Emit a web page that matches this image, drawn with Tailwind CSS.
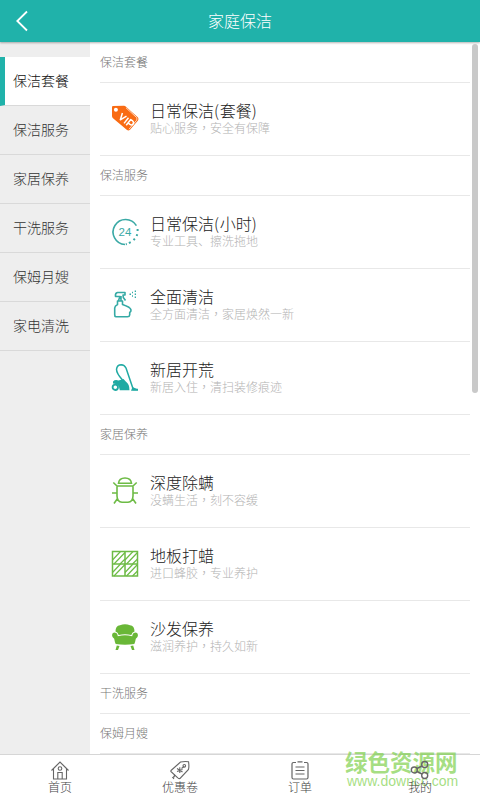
<!DOCTYPE html>
<html lang="zh-CN">
<head>
<meta charset="utf-8">
<title>家庭保洁</title>
<script src="https://cdn.jsdelivr.net/npm/@tailwindcss/browser@4"></script>
</head>
<body class="w-[480px] h-[800px] overflow-hidden bg-white font-['Noto_Sans_CJK_SC',sans-serif] font-light text-[#222]">
<div class="flex flex-col h-[800px] relative">
  <header class="relative z-10 h-[42px] shrink-0 bg-[#20b2aa] shadow-[0_1px_2px_rgba(0,0,0,0.3)] grid grid-cols-[48px_1fr_48px] items-center text-white">
    <svg class="ml-4 w-3 h-[22px]" viewBox="0 0 12 22" fill="none" stroke="currentColor" stroke-width="1.8"><path d="M11 1.5 1.3 11 11 20.5"/></svg>
    <h1 class="text-base leading-[40px] h-[42px] text-center font-light">家庭保洁</h1>
  </header>

  <main class="flex flex-1 min-h-0">
    <nav class="w-[90px] shrink-0 bg-[#eee] pt-[15px] text-sm text-[#333]">
      <a class="block h-[49px] leading-[46px] border-b border-[#d9d9d9] border-l-[5px] border-l-[#20b2aa] pl-2 bg-white text-[#111]">保洁套餐</a>
      <a class="block h-[49px] leading-[46px] border-b border-[#d9d9d9] pl-[13px]">保洁服务</a>
      <a class="block h-[49px] leading-[46px] border-b border-[#d9d9d9] pl-[13px]">家居保养</a>
      <a class="block h-[49px] leading-[46px] border-b border-[#d9d9d9] pl-[13px]">干洗服务</a>
      <a class="block h-[49px] leading-[46px] border-b border-[#d9d9d9] pl-[13px]">保姆月嫂</a>
      <a class="block h-[49px] leading-[46px] border-b border-[#d9d9d9] pl-[13px]">家电清洗</a>
    </nav>

    <section class="flex-1 min-w-0 pl-[10px] pr-[10px] pt-px overflow-hidden">
      <h2 class="h-10 leading-[38px] text-xs text-[#777] border-b border-[#e8e8e8]">保洁套餐</h2>
      <article class="h-[73px] border-b border-[#e8e8e8] flex pl-[10px] pt-5">
        <svg class="w-[30px] h-[30px] mr-[10px] shrink-0" viewBox="0 0 30 30">
          <path d="M3 3 14 2.800Q15 2.800 16 3.800L28 14.500Q29 16 28 17.500L20 26.800Q18.500 28 17 27L3 15.200Q2 14.500 2 13V4.200Q2 3 3 3Z" fill="#f96b13"/>
          <path d="M16 4.800 26.600 14.500Q27.500 16 26.500 17.400L19 26.200" fill="none" stroke="#fff" stroke-width=".7"/>
          <circle cx="5.900" cy="6.800" r="2" fill="#fff"/>
          <g transform="translate(7.200 15) rotate(38)" fill="none" stroke="#fff" stroke-width="1.500" stroke-linejoin="round"><path d="M1-7.200 3.600-.500 6.200-7.200M8.700-7.200V0M11.600.200V-7.200H14Q16.200-7 16.200-5T14-2.800H11.600"/></g>
        </svg>
        <div class="-mt-px"><h3 class="text-base leading-[17px] font-light">日常保洁<span class="tracking-[0.6px]">(</span>套餐<span class="tracking-[0.6px]">)</span></h3><p class="text-xs leading-[18px] text-[#b3b3b3]">贴心服务<span class="font-['Noto_Sans_CJK_TC']" lang="zh-TW">，</span>安全有保障</p></div>
      </article>

      <h2 class="h-10 leading-[38px] text-xs text-[#777] border-b border-[#e8e8e8]">保洁服务</h2>
      <article class="h-[73px] border-b border-[#e8e8e8] flex pl-[10px] pt-5">
        <svg class="w-[30px] h-[30px] mr-[10px] shrink-0" viewBox="0 0 30 30" fill="none" stroke="#3aa9a5" stroke-width="1.6">
          <path d="M26.400 9.700A12.500 12.500 0 1 0 15 28.500"/>
          <path d="M27.600 13v2M27.200 18.300l-.500 1.800M24.800 22.700l-1.200 1.500M20.700 26.200l-1.800.900M16.800 28.100l-1 .200" stroke-width="2"/>
          <text x="15" y="20" text-anchor="middle" font-family="Liberation Sans" font-size="11.5" fill="#3aa9a5" stroke="none">24</text>
        </svg>
        <div class="-mt-px"><h3 class="text-base leading-[17px] font-light">日常保洁<span class="tracking-[0.6px]">(</span>小时<span class="tracking-[0.6px]">)</span></h3><p class="text-xs leading-[18px] text-[#b3b3b3]">专业工具、擦洗拖地</p></div>
      </article>
      <article class="h-[73px] border-b border-[#e8e8e8] flex pl-[10px] pt-5">
        <svg class="w-[30px] h-[30px] mr-[10px] shrink-0" viewBox="0 0 30 30" fill="none" stroke="#35aaa5" stroke-width="1.6" stroke-linejoin="round">
          <path d="M8.500 11.500 10 7.500H5.500Q5 4 7.500 3.500H15V6H13L13.300 8.500 15.500 11.500M11 7v4.500M7.500 12H12.500V15.500Q20.500 18 21 21 21.200 22.500 19.700 23.500V26Q19.500 27.800 17.500 27.800H6Q4.500 27.500 4.700 25.500V19Q4.800 17 7.500 15.500Z"/>
          <path d="M19.500 5.200h1.500M22 3.500h1M22 7h1M24.700 2.300h1.300M24.700 5.200h1.300M24.700 8.200h1.300"/>
        </svg>
        <div class="-mt-px"><h3 class="text-base leading-[17px] font-light">全面清洁</h3><p class="text-xs leading-[18px] text-[#b3b3b3]">全方面清洁<span class="font-['Noto_Sans_CJK_TC']" lang="zh-TW">，</span>家居焕然一新</p></div>
      </article>
      <article class="h-[73px] border-b border-[#e8e8e8] flex pl-[10px] pt-5">
        <svg class="w-[30px] h-[30px] mr-[10px] shrink-0" viewBox="0 0 30 30" fill="none" stroke="#20aaa3">
          <path d="M12.500 18Q6.500 11.500 6.500 7.300 7 2.700 11.300 2.700 14.500 2.800 16 6L23.300 27.500H28" stroke-width="1.500"/>
          <path d="M22.500 25 28 27.600V28.700H21Z" fill="#20aaa3" stroke="none"/>
          <path d="M3 19.500Q5 17.200 8.500 18.500L13.500 17 16 19.800Q19.500 22.200 19.500 28.200H9.800Q9.500 21.800 3 21.500Z" fill="#20aaa3" stroke="none"/>
          <circle cx="5.300" cy="25.300" r="2.700" stroke-width="1.800"/>
        </svg>
        <div class="-mt-px"><h3 class="text-base leading-[17px] font-light">新居开荒</h3><p class="text-xs leading-[18px] text-[#b3b3b3]">新居入住<span class="font-['Noto_Sans_CJK_TC']" lang="zh-TW">，</span>清扫装修痕迹</p></div>
      </article>

      <h2 class="h-10 leading-[38px] text-xs text-[#777] border-b border-[#e8e8e8]">家居保养</h2>
      <article class="h-[73px] border-b border-[#e8e8e8] flex pl-[10px] pt-5">
        <svg class="w-[30px] h-[30px] mr-[10px] shrink-0" viewBox="0 0 30 30" fill="none" stroke="#6dbb45" stroke-width="1.6">
          <path d="M8.500 8.300Q9 3 15 3T21.500 8.300ZM3.300 7.500 7 11H23L26.700 7.500M7 11V21Q7.200 27 12 27.300H18Q22.800 27 23 21V11M2 18H7M23 18h5M7.500 23.500 4 28.500M22.500 23.500 26 28.500"/>
        </svg>
        <div class="-mt-px"><h3 class="text-base leading-[17px] font-light">深度除螨</h3><p class="text-xs leading-[18px] text-[#b3b3b3]">没螨生活<span class="font-['Noto_Sans_CJK_TC']" lang="zh-TW">，</span>刻不容缓</p></div>
      </article>
      <article class="h-[73px] border-b border-[#e8e8e8] flex pl-[10px] pt-5">
        <svg class="w-[30px] h-[30px] mr-[10px] shrink-0" viewBox="0 0 30 30" fill="none" stroke="#6dbb45">
          <path d="M2.500 3.500h25v24.500h-25ZM15 3.500v24.500M2.500 16h25" stroke-width="1.500"/>
          <path d="M2.500 12 10.500 3.500M4 16 15 4.500M10 16 15 11M15 12 23 3.500M16.500 16 27.500 4.500M22.500 16 27.500 11M2.500 24.500 10.500 16M4 28 15 16.500M15 24.500 23 16M16.500 28 27.500 16.500M22.500 28 27.500 23" stroke-width="1.200"/>
        </svg>
        <div class="-mt-px"><h3 class="text-base leading-[17px] font-light">地板打蜡</h3><p class="text-xs leading-[18px] text-[#b3b3b3]">进口蜂胶<span class="font-['Noto_Sans_CJK_TC']" lang="zh-TW">，</span>专业养护</p></div>
      </article>
      <article class="h-[73px] border-b border-[#e8e8e8] flex pl-[10px] pt-5">
        <svg class="w-[30px] h-[30px] mr-[10px] shrink-0" viewBox="0 0 30 30" fill="#69b737">
          <path d="M5.500 10.500Q5.500 4.500 10 4.200 15 2.200 20 4.200 24.500 4.500 24.500 10.500 22 11 21.300 14Q15 12.300 8.700 14 8 11 5.500 10.500Z"/>
          <path d="M2 14Q2.200 11.600 4.800 11.600 7.500 12 7.800 15.200 15 13.300 22.200 15.200 22.500 12 25.200 11.600 27.800 11.600 28 14 28 16.500 25.800 17.700 25 22 24.300 23 15 24.600 5.700 23 5 22 4.200 17.700 2 16.500 2 14Z"/>
          <path d="M6.800 24.500 9.500 25 8 29H5.500ZM23.200 24.500 20.500 25 22 29h2.500Z"/>
        </svg>
        <div class="-mt-px"><h3 class="text-base leading-[17px] font-light">沙发保养</h3><p class="text-xs leading-[18px] text-[#b3b3b3]">滋润养护<span class="font-['Noto_Sans_CJK_TC']" lang="zh-TW">，</span>持久如新</p></div>
      </article>
      <h2 class="h-10 leading-[38px] text-xs text-[#777] border-b border-[#e8e8e8]">干洗服务</h2>
      <h2 class="h-10 leading-[38px] text-xs text-[#777] border-b border-[#e8e8e8]">保姆月嫂</h2>
    </section>
  </main>

  <footer class="h-[46px] shrink-0 border-t border-[#d6d6d6] grid grid-cols-4 bg-white text-xs leading-[14px] text-[#444]">
    <a class="flex flex-col items-center pt-[5px]">
      <svg class="w-5 h-5" viewBox="0 0 20 20" fill="none" stroke="#666" stroke-width="1.1"><path d="M1.500 10.500 10 2l8.500 8.500M3.500 9v10h13V9M7.800 19v-6.500h4.400V19"/><circle cx="10" cy="8.500" r="1.800"/></svg>
      <span>首页</span>
    </a>
    <a class="flex flex-col items-center pt-[5px]">
      <svg class="w-5 h-5" viewBox="0 0 20 20" fill="none" stroke="#666" stroke-width="1.1"><path d="M1 10.500 10.500 2Q14 1.300 18.500 1.700 19.300 6 18.500 9.500L10 18.500Q8.500 19 7.500 17.500L1.500 12Q.5 11.500 1 10.500Z"/><circle cx="14.300" cy="5.800" r="1.300"/><path d="M7 8.500 12.500 12M9.800 7.300V13M7 11.500 12.500 9.500M11.500 8.500 14 6.500M4.500 14.500Q4.800 17 2.800 17.500L4 19"/></svg>
      <span>优惠卷</span>
    </a>
    <a class="flex flex-col items-center pt-[5px]">
      <svg class="w-5 h-5" viewBox="0 0 20 20" fill="none" stroke="#666" stroke-width="1.2"><path d="M6 2.500H3.500Q2 2.500 2 4v13.500Q2 19 3.500 19h13Q18 19 18 17.500V4Q18 2.500 16.500 2.500H14M7.500 1.900h5M5.500 7h9M5.500 10.500h9M5.500 14h9"/></svg>
      <span>订单</span>
    </a>
    <a class="relative z-30 flex flex-col items-center pt-[5px]">
      <svg class="w-5 h-5" viewBox="0 0 20 20" fill="none" stroke="#666" stroke-width="1.400"><circle cx="4.300" cy="10" r="3"/><circle cx="14.700" cy="4.500" r="3"/><circle cx="14.700" cy="15.500" r="3"/><path d="M7 8.500 12 6M7 11.500 12 14"/></svg>
      <span>我的</span>
    </a>
  </footer>

  <div class="absolute z-20 left-[472px] top-[44px] w-[6px] h-[349px] rounded-full bg-[#c9c9c9]"></div>
  <div class="absolute z-20 left-[345px] top-[749px] w-[116px] text-[#7ed04b]/70 whitespace-nowrap">
    <div class="text-[22.5px] leading-[24px] font-bold">绿色资源网</div>
    <div class="text-[14px] leading-[16px] pl-[2px] font-['Liberation_Sans',sans-serif] font-normal">www.downcc.com</div>
  </div>
</div>
</body>
</html>
